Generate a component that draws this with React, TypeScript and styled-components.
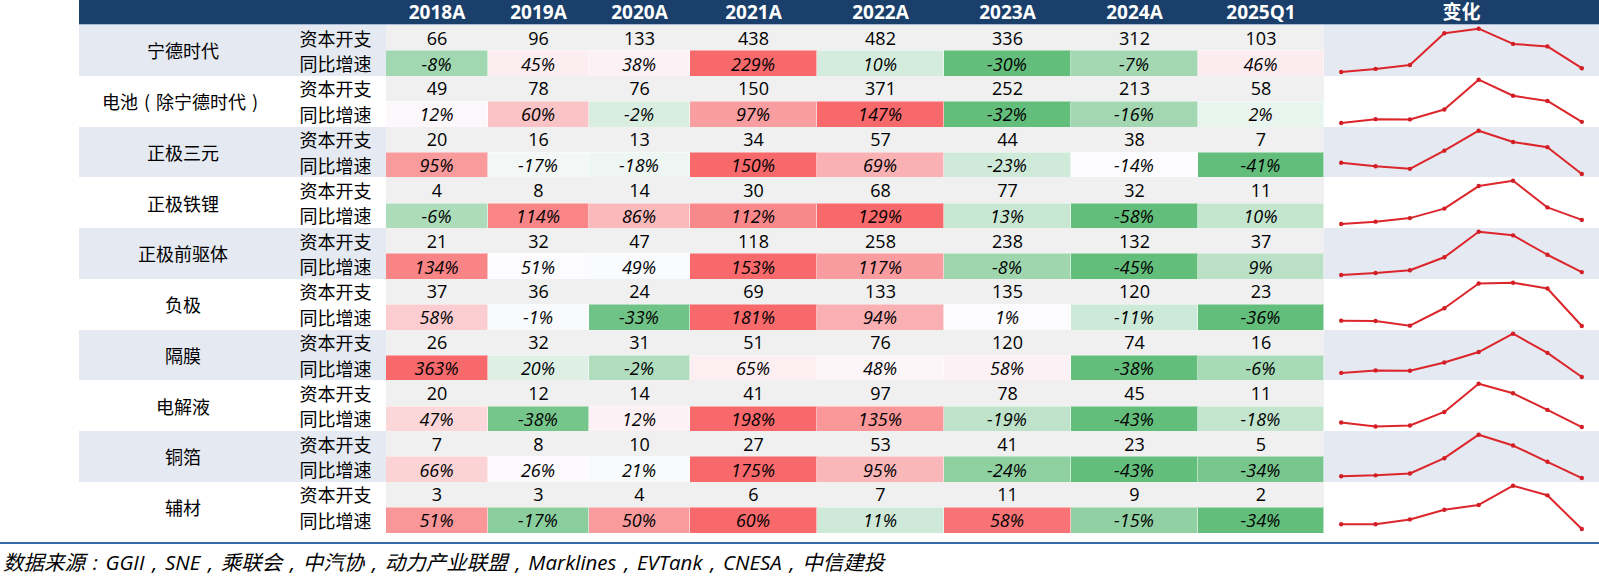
import React from 'react';
import styled, { createGlobalStyle } from 'styled-components';

const GlobalStyle = createGlobalStyle`
  html, body {
    margin: 0;
    padding: 0;
    background: #ffffff;
  }
  body {
    font-family: "Open Sans", "Noto Sans CJK SC", sans-serif;
    color: #000000;
  }
`;

// column widths: name | metric | 8 periods | sparkline
const COLS = '206px 101px 102px 101px 101px 127px 127px 127px 127px 126px 275px';
const ROW_H = 25.375;

const YEARS = ['2018A', '2019A', '2020A', '2021A', '2022A', '2023A', '2024A', '2025Q1'];

type Segment = { name: React.ReactNode; key: string; capex: number[]; growth: number[] };

// full-width punctuation, drawn centred in its em box like the original font does
const Punct = styled.span`
  display: inline-block;
  width: 1em;
  text-align: center;
`;

const DATA: Segment[] = [
  { key: 'catl', name: '宁德时代', capex: [66, 96, 133, 438, 482, 336, 312, 103], growth: [-8, 45, 38, 229, 10, -30, -7, 46] },
  {
    key: 'battery',
    name: (
      <>
        电池<Punct>(</Punct>除宁德时代<Punct>)</Punct>
      </>
    ),
    capex: [49, 78, 76, 150, 371, 252, 213, 58],
    growth: [12, 60, -2, 97, 147, -32, -16, 2],
  },
  { key: 'ncm', name: '正极三元', capex: [20, 16, 13, 34, 57, 44, 38, 7], growth: [95, -17, -18, 150, 69, -23, -14, -41] },
  { key: 'lfp', name: '正极铁锂', capex: [4, 8, 14, 30, 68, 77, 32, 11], growth: [-6, 114, 86, 112, 129, 13, -58, 10] },
  { key: 'pre', name: '正极前驱体', capex: [21, 32, 47, 118, 258, 238, 132, 37], growth: [134, 51, 49, 153, 117, -8, -45, 9] },
  { key: 'anode', name: '负极', capex: [37, 36, 24, 69, 133, 135, 120, 23], growth: [58, -1, -33, 181, 94, 1, -11, -36] },
  { key: 'sep', name: '隔膜', capex: [26, 32, 31, 51, 76, 120, 74, 16], growth: [363, 20, -2, 65, 48, 58, -38, -6] },
  { key: 'ele', name: '电解液', capex: [20, 12, 14, 41, 97, 78, 45, 11], growth: [47, -38, 12, 198, 135, -19, -43, -18] },
  { key: 'cu', name: '铜箔', capex: [7, 8, 10, 27, 53, 41, 23, 5], growth: [66, 26, 21, 175, 95, -24, -43, -34] },
  { key: 'aux', name: '辅材', capex: [3, 3, 4, 6, 7, 11, 9, 2], growth: [51, -17, 50, 60, 11, 58, -15, -34] },
];

const SOURCES = ['GGII', 'SNE', '乘联会', '中汽协', '动力产业联盟', 'Marklines', 'EVTank', 'CNESA', '中信建投'];

// excel style 3-colour scale per row: min green, median white, max red
const GREEN = [99, 190, 123];
const MID = [252, 252, 255];
const RED = [248, 105, 107];

function scaleColor(v: number, row: number[]) {
  const sorted = [...row].sort((a, b) => a - b);
  const n = sorted.length;
  const median = n % 2 ? sorted[(n - 1) / 2] : (sorted[n / 2 - 1] + sorted[n / 2]) / 2;
  const min = sorted[0];
  const max = sorted[n - 1];
  let target = MID;
  let t = 0;
  if (v >= median) {
    target = RED;
    t = max === median ? 0 : (v - median) / (max - median);
  } else {
    target = GREEN;
    t = median === min ? 0 : (median - v) / (median - min);
  }
  const c = MID.map((m, i) => Math.round(m + (target[i] - m) * t));
  return `rgb(${c[0]}, ${c[1]}, ${c[2]})`;
}

const Page = styled.div`
  width: 1599px;
`;

const Table = styled.div`
  margin-left: 79px;
  width: 1520px;
`;

const HeaderRow = styled.div`
  display: grid;
  grid-template-columns: ${COLS};
  height: 24px;
  background: #1b3f6b;
  border-bottom: 1px solid #a7bad6;
`;

const HeaderCell = styled.div<{ $span?: number }>`
  grid-column: span ${(p) => p.$span ?? 1};
  display: flex;
  align-items: center;
  justify-content: center;
  color: #ffffff;
  font-family: "Open Sans", "Noto Sans CJK SC", sans-serif;
  font-weight: 700;
  font-size: 19px;
  line-height: 24px;
`;

const Group = styled.div<{ $shaded: boolean }>`
  display: grid;
  grid-template-columns: ${COLS};
  grid-template-rows: ${ROW_H}px ${ROW_H}px;
  background: ${(p) => (p.$shaded ? '#e5e9f1' : '#ffffff')};
`;

const NameCell = styled.div`
  grid-column: 1;
  grid-row: 1 / span 2;
  display: flex;
  align-items: center;
  justify-content: center;
  font-family: "Noto Sans CJK SC", sans-serif;
  font-size: 18px;
  padding-left: 2px;
  white-space: nowrap;
`;

const MetricCell = styled.div<{ $row: number }>`
  grid-column: 2;
  grid-row: ${(p) => p.$row};
  display: flex;
  align-items: center;
  justify-content: center;
  font-family: "Noto Sans CJK SC", sans-serif;
  font-size: 18px;
  line-height: 1;
`;

const ValueCell = styled.div`
  grid-row: 1;
  display: flex;
  align-items: center;
  justify-content: center;
  background: #f0f0f0;
  font-size: 18px;
  line-height: 1;
`;

const GrowthCell = styled.div`
  grid-row: 2;
  display: flex;
  align-items: center;
  justify-content: center;
  box-sizing: border-box;
  border-right: 1px solid rgba(255, 255, 255, 0.55);
  border-top: 1px solid rgba(255, 255, 255, 0.45);
  font-size: 18px;
  font-style: italic;
  line-height: 1;
`;

const SparkCell = styled.div`
  grid-column: 11;
  grid-row: 1 / span 2;
`;

const Rule = styled.div`
  height: 2px;
  margin-top: 9px;
  background: #3469a5;
`;

const Source = styled.div`
  margin-top: 5px;
  padding-left: 3px;
  font-family: "Open Sans", "Noto Sans CJK SC", sans-serif;
  font-style: italic;
  font-size: 20.5px;
  line-height: 26px;
  white-space: nowrap;
`;

const Sparkline = ({ values }: { values: number[] }) => {
  const w = 275;
  const h = ROW_H * 2;
  const min = Math.min(...values);
  const max = Math.max(...values);
  const step = w / values.length;
  const pts = values.map((v, i) => {
    const x = step / 2 + i * step;
    const t = max === min ? 0.5 : (v - min) / (max - min);
    const y = 3.7 + (1 - t) * (h - 7.4);
    return [x, y];
  });
  return (
    <svg width={w} height={h} viewBox={`0 0 ${w} ${h}`} style={{ display: 'block' }}>
      <polyline
        points={pts.map((p) => p.join(',')).join(' ')}
        fill="none"
        stroke="#dc262b"
        strokeWidth={2}
        strokeLinejoin="round"
      />
      {pts.map(([x, y], i) => (
        <circle key={i} cx={x} cy={y} r={2.2} fill="#d21f26" />
      ))}
    </svg>
  );
};

export default function App() {
  return (
    <Page>
      <GlobalStyle />
      <Table>
        <HeaderRow>
          <HeaderCell $span={2} />
          {YEARS.map((y) => (
            <HeaderCell key={y}>{y}</HeaderCell>
          ))}
          <HeaderCell>变化</HeaderCell>
        </HeaderRow>
        {DATA.map((seg, gi) => (
          <Group key={seg.key} $shaded={gi % 2 === 0}>
            <NameCell>{seg.name}</NameCell>
            <MetricCell $row={1}>资本开支</MetricCell>
            {seg.capex.map((v, i) => (
              <ValueCell key={`c${i}`} style={{ gridColumn: i + 3 }}>{v}</ValueCell>
            ))}
            <MetricCell $row={2}>同比增速</MetricCell>
            {seg.growth.map((v, i) => (
              <GrowthCell
                key={`g${i}`}
                style={{ gridColumn: i + 3, background: scaleColor(v, seg.growth) }}
              >
                {v}%
              </GrowthCell>
            ))}
            <SparkCell>
              <Sparkline values={seg.capex} />
            </SparkCell>
          </Group>
        ))}
      </Table>
      <Rule />
      <Source>
        数据来源<Punct>:</Punct>
        {SOURCES.map((s, i) => (
          <React.Fragment key={s}>
            {s}
            {i < SOURCES.length - 1 && <Punct>,</Punct>}
          </React.Fragment>
        ))}
      </Source>
    </Page>
  );
}
